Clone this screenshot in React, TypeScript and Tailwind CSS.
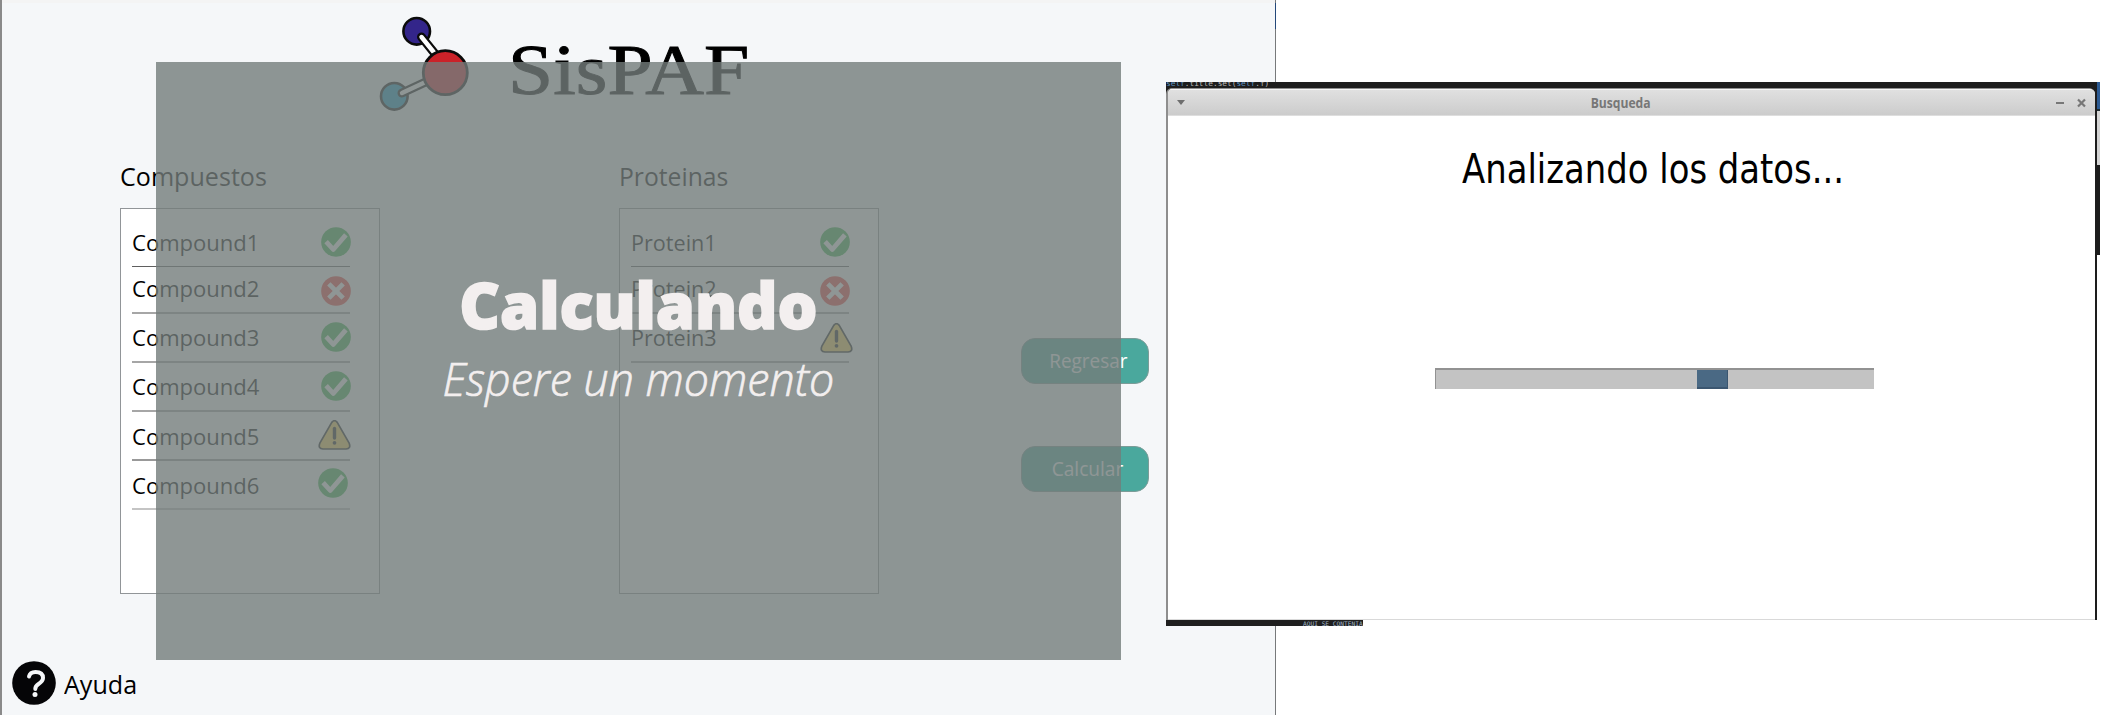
type Status = "ok" | "error" | "warning";

interface Row {
  name: string;
  status: Status;
  row: string;
  text: string;
  icon: string;
}

const compounds: Row[] = [
  { name: "Compound1", status: "ok", row: "h-[58px] border-b border-[#5f5f5f]", text: "mb-[11px]", icon: "mb-[9px] -mr-px" },
  { name: "Compound2", status: "error", row: "h-[47px] border-b-2 border-[#a6a6a6]", text: "mb-[11px]", icon: "mb-[6px] -mr-px" },
  { name: "Compound3", status: "ok", row: "h-[49px] border-b-2 border-[#a6a6a6]", text: "mb-[11px]", icon: "mb-[9px] -mr-px" },
  { name: "Compound4", status: "ok", row: "h-[49px] border-b-2 border-[#a6a6a6]", text: "mb-[11px]", icon: "mb-[9px] -mr-px" },
  { name: "Compound5", status: "warning", row: "h-[49px] border-b-2 border-[#999999]", text: "mb-[10px]", icon: "mb-[9px] -mr-px" },
  { name: "Compound6", status: "ok", row: "h-[49px] border-b-2 border-[#c4c4c4]", text: "mb-[10px]", icon: "mb-[10px] mr-[2px]" },
];

const proteins: Row[] = [
  { name: "Protein1", status: "ok", row: "h-[58px] border-b border-[#5f5f5f]", text: "mb-[11px]", icon: "mb-[9px] -mr-px" },
  { name: "Protein2", status: "error", row: "h-[47px] border-b-2 border-[#a6a6a6]", text: "mb-[11px]", icon: "mb-[6px] -mr-px" },
  { name: "Protein3", status: "warning", row: "h-[49px] border-b-2 border-[#a6a6a6]", text: "mb-[11px]", icon: "mb-[8px] -mr-[4px]" },
];

function StatusIcon({ status, className }: { status: Status; className: string }) {
  if (status === "warning") {
    return (
      <svg viewBox="0 0 96 88" className={`h-[30px] w-[33px] shrink-0 ${className}`}>
        <path d="M40 7Q48 -3 56 7L91 68Q97 84 82 85H14Q-1 84 5 68Z" fill="#f5cd50" stroke="#1c1c1c" strokeWidth="5" strokeLinejoin="round" />
        <path d="M48 25V53" stroke="#1c1c1c" strokeWidth="10" strokeLinecap="round" />
        <circle cx="48" cy="67" r="5.5" fill="#1c1c1c" />
      </svg>
    );
  }
  return (
    <svg viewBox="0 0 88 88" className={`h-[30px] w-[30px] shrink-0 ${className}`}>
      <circle cx="44" cy="44" r="43.5" fill={status === "ok" ? "#38b44a" : "#f0413c"} />
      {status === "ok" ? (
        <path d="M15 43L36 66L73 23" fill="none" stroke="#fff" strokeWidth="14" strokeLinejoin="round" />
      ) : (
        <path d="M23 23L65 65M65 23L23 65" stroke="#fff" strokeWidth="14" />
      )}
    </svg>
  );
}

function List({ title, rows, titleFit, rowFit }: { title: string; rows: Row[]; titleFit: string; rowFit: string }) {
  return (
    <section className="w-[260px]">
      <h2 className="h-12 text-[26px] leading-8 text-black">
        <span className={`inline-block origin-left ${titleFit}`}>{title}</span>
      </h2>
      <ul className="h-[386px] border border-[#919598] bg-white pl-[11px]">
        {rows.map((r) => (
          <li key={r.name} className={`flex w-[218px] items-end justify-between ${r.row}`}>
            <span className={`inline-block origin-left text-[22.5px] leading-6 text-black ${rowFit} ${r.text}`}>{r.name}</span>
            <StatusIcon status={r.status} className={r.icon} />
          </li>
        ))}
      </ul>
    </section>
  );
}

function ActionButton({ label, fit }: { label: string; fit: string }) {
  return (
    <button className="flex h-[46px] w-32 items-center justify-center rounded-[14px] border border-[#7c9c98] bg-[#4aa89d] text-[20px] leading-6 text-white">
      <span className={`inline-block ${fit}`}>{label}</span>
    </button>
  );
}

function Logo() {
  return (
    <svg viewBox="370 3 110 157" className="h-[157px] w-[110px]">
      <g stroke="#0b0b0b" strokeWidth="2.6">
        <circle cx="416.7" cy="31.3" r="13.3" fill="#33258a" />
        <circle cx="394.3" cy="96.3" r="13.3" fill="#0e97c0" />
      </g>
      <g strokeLinecap="round">
        <path d="M421.5 37L440 60M402 93L432 79" stroke="#0b0b0b" strokeWidth="9" />
        <path d="M421.5 37L440 60M402 93L432 79" stroke="#fff" strokeWidth="4.4" />
      </g>
      <circle cx="445.3" cy="72.7" r="22" fill="#cb2229" stroke="#0b0b0b" strokeWidth="2.8" />
    </svg>
  );
}

function SearchWindow() {
  return (
    <div className="absolute left-[1166px] top-[82px] flex h-[544px] w-[934px]">
      <div className="flex w-[931px] flex-col">
        <div className="flex h-[538px] flex-col bg-[#1d1d1d]">
          <div className="h-[6px] overflow-hidden whitespace-nowrap font-['DejaVu_Sans_Mono'] text-[7.8px] leading-[3px] text-[#5c93c4]">
            self<span className="text-[#b9b9b9]">.title.set(</span>self<span className="text-[#b9b9b9]">.f)</span>
          </div>
          <div className="mr-[2px] flex h-[532px] flex-col overflow-hidden rounded-t-[6px] border-l-2 border-t border-[#8e8e8e] bg-white">
            <div className="flex h-[27px] items-center border-b border-t border-b-[#dedede] border-t-[#f6f6f6] bg-linear-to-b from-[#e0e0e0] to-[#cccccc] pl-[9px] pr-[9px] text-[#777]">
              <svg viewBox="0 0 8 5" className="h-[5px] w-2"><path d="M0 0H8L4 5Z" fill="#6e6e6e" /></svg>
              <div className="flex flex-1 justify-center text-[14px] font-bold leading-5">
                <span className="inline-block scale-x-[0.865]">Busqueda</span>
              </div>
              <svg viewBox="0 0 30 10" className="h-[10px] w-[30px]">
                <path d="M0 5H8" stroke="#777" strokeWidth="2" />
                <path d="M22 1.5L29 8.5M29 1.5L22 8.5" stroke="#777" strokeWidth="2.2" />
              </svg>
            </div>
            <div className="flex flex-1 flex-col border-b border-[#d9d9d9]">
              <p className="pl-[294px] pt-[29px] font-['DejaVu_Sans'] text-[40px] leading-[48px] text-black">
                <span className="inline-block origin-left scale-x-[0.847] whitespace-nowrap">Analizando los datos...</span>
              </p>
              <div className="ml-[267px] mt-[175px] h-[21px] w-[439px] border-l border-t-2 border-[#929292] bg-[#c3c3c3] pl-[261px]">
                <div className="h-[19px] w-[31px] border-b-2 border-r border-[#3b5670] bg-[#4a6984]" />
              </div>
            </div>
          </div>
        </div>
        <div className="h-[6px] w-[197px] overflow-hidden whitespace-nowrap bg-[#1f1f1f] pl-[137px] font-['DejaVu_Sans_Mono'] text-[6.2px] leading-[7px] text-[#9fb4c6]">
          AQUI SE CONTENIA
        </div>
      </div>
      <div className="flex w-[3px] flex-col">
        <div className="h-[27px] bg-[#2c5a92]" />
        <div className="h-[2px] bg-[#1d2b30]" />
        <div className="h-[54px] bg-[#d4d4d4]" />
        <div className="h-[90px] bg-[#1d1d1d]" />
      </div>
    </div>
  );
}

export default function App() {
  return (
    <div className="relative h-[715px] w-[2121px] overflow-hidden bg-white font-['Open_Sans','Noto_Sans',sans-serif]">
      <div className="flex">
        <div className="flex h-[715px] w-[1275px] flex-col border-l-2 border-l-[#8a8a8a] bg-[#f5f7f9]">
          <div className="h-[3px] bg-[#f4f4f4]" />
          <header className="flex h-[157px] pl-[368px]">
            <Logo />
            <h1 className="ml-[28px] mt-[32px] font-['Liberation_Serif'] text-[71px] leading-[70px] text-black [-webkit-text-stroke:1px_black]">
              <span className="inline-block origin-left scale-x-[1.145]">SisPAF</span>
            </h1>
          </header>
          <main className="flex h-[433px] pl-[118px]">
            <List title="Compuestos" rows={compounds} titleFit="scale-x-[0.965]" rowFit="scale-x-[0.98]" />
            <div className="ml-[239px]">
              <List title="Proteinas" rows={proteins} titleFit="scale-x-[0.95]" rowFit="scale-x-[0.96]" />
            </div>
            <div className="ml-[142px] flex flex-col gap-[62px] pt-[178px]">
              <ActionButton label="Regresar" fit="translate-x-[3px] scale-x-[0.945]" />
              <ActionButton label="Calcular" fit="translate-x-[2px] scale-x-[0.955]" />
            </div>
          </main>
          <footer className="mt-[68px] flex h-[44px] items-center pl-[10px] text-[26px] leading-8 text-black">
            <svg viewBox="0 0 44 44" className="h-[44px] w-[44px]">
              <circle cx="22" cy="22" r="21.8" fill="#050507" />
              <path d="M17 15.5Q18 11 23.500 11Q31 11 31 17Q31 20 26.500 23Q23.300 25 23.300 28" fill="none" stroke="#f5f7f9" strokeWidth="4" strokeLinecap="round" />
              <circle cx="23" cy="33.5" r="2.5" fill="#f5f7f9" />
            </svg>
            <span className="ml-[8px] mt-[2px] inline-block origin-left scale-x-[0.965]">Ayuda</span>
          </footer>
        </div>
        <div className="flex h-[715px] w-px flex-col bg-[#77797b]">
          <div className="mt-[3px] h-[26px] bg-[#24487a]" />
        </div>
      </div>
      <div className="absolute left-[156px] top-[62px] flex h-[598px] w-[965px] flex-col items-center bg-[#737c7b]/80 pt-[211px] text-[#f3efef]">
        <p className="text-[64px] font-extrabold leading-[64px] [-webkit-text-stroke:1.6px_#f3efef]">
          <span className="inline-block scale-x-[0.982]">Calculando</span>
        </p>
        <p className="mt-[11px] text-[46px] font-light italic leading-[60px] [-webkit-text-stroke:0.7px_#f3efef]">
          <span className="inline-block scale-x-[0.973]">Espere un momento</span>
        </p>
      </div>
      <SearchWindow />
    </div>
  );
}
